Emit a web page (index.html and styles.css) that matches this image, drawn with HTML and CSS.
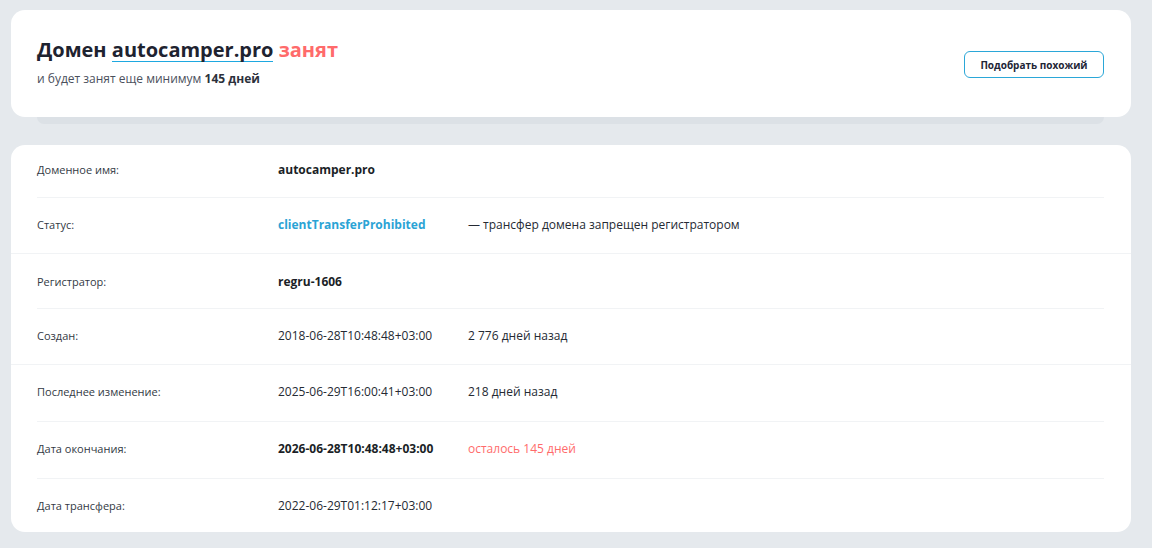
FILE: index.html
```html
<!DOCTYPE html>
<html lang="ru">
<head>
<meta charset="utf-8">
<title>autocamper.pro</title>
<link rel="stylesheet" href="styles.css">
</head>
<body>
<main class="page">
  <section class="hero">
    <div class="hero-card">
      <div class="hero-text">
        <h1 class="hero-title">Домен <span class="domain">autocamper.pro</span> <span class="busy">занят</span></h1>
        <p class="hero-sub">и будет занят еще минимум <b>145 дней</b></p>
      </div>
      <button class="btn" type="button">Подобрать похожий</button>
    </div>
    <div class="hero-shadow"></div>
  </section>

  <section class="info-card">
    <div class="row first">
      <div class="label">Доменное имя:</div>
      <div class="value strong">autocamper.pro</div>
      <div class="extra"></div>
    </div>
    <div class="row full">
      <div class="label">Статус:</div>
      <div class="value strong status">clientTransferProhibited</div>
      <div class="extra">— трансфер домена запрещен регистратором</div>
    </div>
    <div class="row">
      <div class="label">Регистратор:</div>
      <div class="value strong">regru-1606</div>
      <div class="extra"></div>
    </div>
    <div class="row full">
      <div class="label">Создан:</div>
      <div class="value">2018-06-28T10:48:48+03:00</div>
      <div class="extra">2 776 дней назад</div>
    </div>
    <div class="row tall">
      <div class="label">Последнее изменение:</div>
      <div class="value">2025-06-29T16:00:41+03:00</div>
      <div class="extra">218 дней назад</div>
    </div>
    <div class="row tall">
      <div class="label">Дата окончания:</div>
      <div class="value strong">2026-06-28T10:48:48+03:00</div>
      <div class="extra warn">осталось 145 дней</div>
    </div>
    <div class="row last">
      <div class="label">Дата трансфера:</div>
      <div class="value">2022-06-29T01:12:17+03:00</div>
      <div class="extra"></div>
    </div>
  </section>
</main>
</body>
</html>
```

FILE: styles.css
```css
* { box-sizing: border-box; }

html, body {
  margin: 0;
  padding: 0;
  background: #e5e9ed;
  font-family: "Open Sans", "Noto Sans", sans-serif;
  color: #222;
}

.page {
  width: 1120px;
  margin: 0 0 0 11px;
  padding-top: 10px;
}

.hero-card {
  background: #fff;
  border-radius: 14px;
  height: 107px;
  padding: 26px 27px 0 26px;
  display: flex;
  justify-content: space-between;
  align-items: flex-start;
}

.hero-title {
  margin: 0;
  font-size: 20px;
  line-height: 28px;
  font-weight: 700;
  color: #1e2330;
}

.domain {
  display: inline-block;
  line-height: 22px;
  border-bottom: 1px solid #1ea8e0;
}

.busy { color: #ff6b6b; }

.hero-sub {
  margin: 6px 0 0;
  font-size: 12px;
  line-height: 18px;
  color: #4a505c;
}

.hero-sub b {
  font-weight: 700;
  color: #2c313c;
}

.btn {
  margin-top: 15px;
  width: 140px;
  height: 27px;
  border: 1px solid #2ba7d8;
  border-radius: 6px;
  background: #fff;
  font-family: "Open Sans", "Noto Sans", sans-serif;
  font-size: 10px;
  font-weight: 700;
  color: #1e2536;
  padding: 0;
  cursor: pointer;
}

.hero-shadow {
  height: 7px;
  margin: 0 27px 0 26px;
  background: #dce1e6;
  border-radius: 0 0 10px 10px;
}

.info-card {
  margin-top: 21px;
  background: #fff;
  border-radius: 14px;
}

.row {
  display: grid;
  grid-template-columns: 241px 190px 1fr;
  align-items: center;
  height: 55px;
  margin: 0 27px 0 26px;
  border-bottom: 1px solid #f1f3f5;
}

.row.first { height: 53px; padding-bottom: 3px; }
.row.tall { height: 57px; padding-bottom: 4px; }

.row.full {
  margin: 0;
  padding: 0 27px 2px 26px;
  height: 56px;
}

.row.last {
  height: 53px;
  border-bottom: none;
}

.label {
  font-size: 11px;
  color: #333a44;
}

.value,
.extra {
  font-size: 12px;
  color: #252a33;
}

.strong {
  font-weight: 700;
  color: #1b1f27;
}

.status { color: #2ba3d5; }

.warn { color: #ff6b6b; }
```
